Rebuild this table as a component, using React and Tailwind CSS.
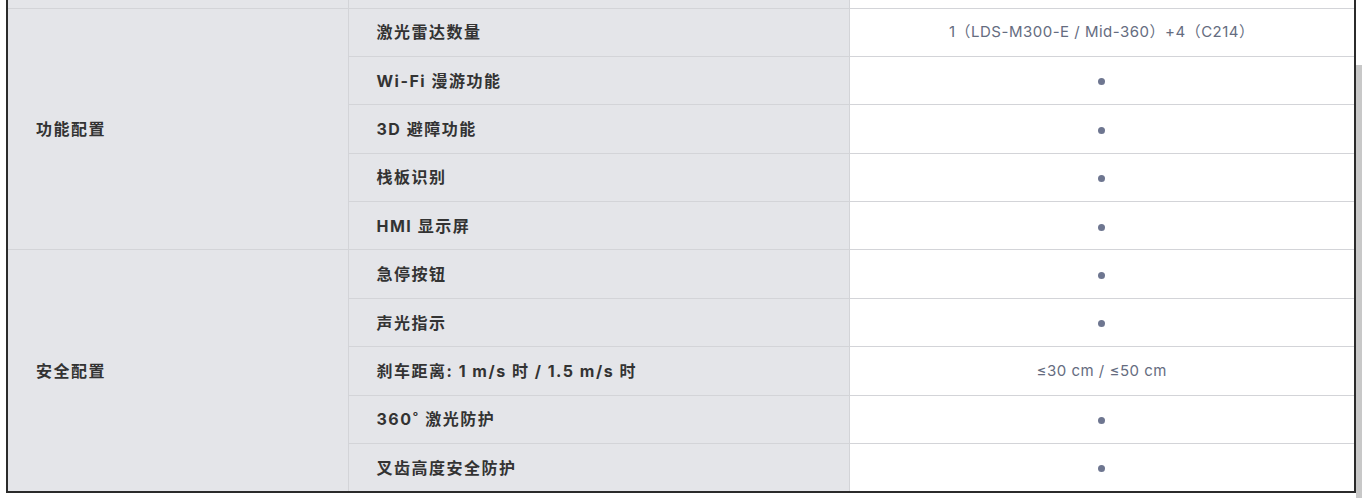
const groups = [
  {
    name: '功能配置',
    rows: [
      { label: '激光雷达数量', value: '1（LDS-M300-E / Mid-360）+4（C214）' },
      { label: 'Wi-Fi 漫游功能', value: null },
      { label: '3D 避障功能', value: null },
      { label: '栈板识别', value: null },
      { label: 'HMI 显示屏', value: null },
    ],
  },
  {
    name: '安全配置',
    rows: [
      { label: '急停按钮', value: null },
      { label: '声光指示', value: null },
      { label: '刹车距离: 1 m/s 时 / 1.5 m/s 时', value: '≤30 cm / ≤50 cm' },
      { label: '360˚ 激光防护', value: null },
      { label: '叉齿高度安全防护', value: null },
    ],
  },
];

const font = { fontFamily: '"Inter", "Noto Sans CJK SC", sans-serif' };

const Dot = () => <span className="inline-block w-[7px] h-[7px] rounded-full bg-[#6e7690]"></span>;

const App = () => {
  return (
    <div className="w-[1362px] h-[498px] bg-white overflow-hidden flex" style={font}>
      <div className="ml-[6px] w-[1350px] h-[493px] border-l-2 border-r-2 border-b-2 border-[#2b2b2b] overflow-hidden">
        <table className="w-full border-collapse table-fixed">
          <colgroup>
            <col className="w-[340px]" />
            <col className="w-[501px]" />
            <col />
          </colgroup>
          <tbody>
            <tr className="h-[8px]">
              <td className="bg-[#e4e5e9] border-b border-r border-[#d3d4d8]"></td>
              <td className="bg-[#e4e5e9] border-b border-r border-[#d3d4d8]"></td>
              <td className="bg-white border-b border-[#d3d4d8]"></td>
            </tr>
            {groups.map((g) =>
              g.rows.map((r, i) => (
                <tr key={g.name + i} className="h-[48.4px]">
                  {i === 0 && (
                    <td
                      rowSpan={g.rows.length}
                      className="bg-[#e4e5e9] border-b border-r border-[#d3d4d8] pl-[28px] text-[16px] tracking-[1.5px] font-bold text-[#333333] align-middle"
                    >
                      {g.name}
                    </td>
                  )}
                  <td className="bg-[#e4e5e9] border-b border-r border-[#d3d4d8] pl-[28px] text-[16px] tracking-[1.5px] font-bold text-[#333333]">
                    {r.label}
                  </td>
                  <td className="bg-white border-b border-[#d3d4d8] text-center text-[15px] tracking-[0.5px] text-[#656c80]">
                    {r.value ? r.value : <Dot />}
                  </td>
                </tr>
              ))
            )}
          </tbody>
        </table>
      </div>
      <div className="flex-1 pt-[65px]">
        <div className="h-full bg-[#c8c8c8]"></div>
      </div>
    </div>
  );
};

export default App;
